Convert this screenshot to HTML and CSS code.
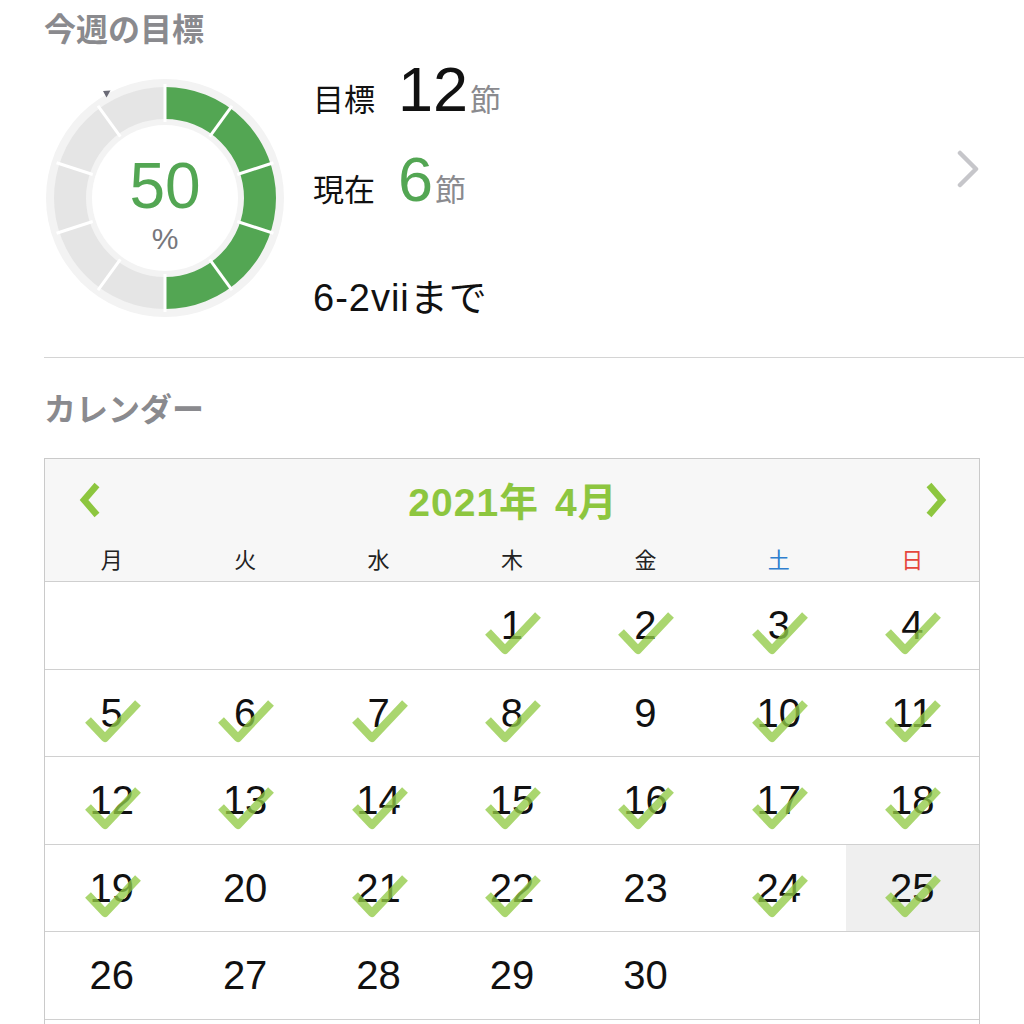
FILE: index.html
```html
<!DOCTYPE html>
<html lang="ja">
<head>
<meta charset="utf-8">
<link rel="stylesheet" href="styles.css">
</head>
<body>
<div class="page">
  <h2 class="section-title">今週の目標</h2>
  <div class="goal">
    <div class="donut">
      <svg class="donut-svg" width="242" height="242" viewBox="0 0 242 242">
        <circle cx="121" cy="121" r="119" fill="#f3f3f3"/>
        <circle cx="121" cy="121" r="73" fill="#ffffff"/>
        <path d="M121 26 A95 95 0 0 1 121 216" fill="none" stroke="#53a653" stroke-width="32"/>
        <path d="M121 216 A95 95 0 0 1 121 26" fill="none" stroke="#e5e5e5" stroke-width="32"/>
        <g stroke="#ffffff" stroke-width="3">
          <line x1="121" y1="45" x2="121" y2="7" transform="rotate(0 121 121)"/>
          <line x1="121" y1="45" x2="121" y2="7" transform="rotate(36 121 121)"/>
          <line x1="121" y1="45" x2="121" y2="7" transform="rotate(72 121 121)"/>
          <line x1="121" y1="45" x2="121" y2="7" transform="rotate(108 121 121)"/>
          <line x1="121" y1="45" x2="121" y2="7" transform="rotate(144 121 121)"/>
          <line x1="121" y1="45" x2="121" y2="7" transform="rotate(180 121 121)"/>
          <line x1="121" y1="45" x2="121" y2="7" transform="rotate(216 121 121)"/>
          <line x1="121" y1="45" x2="121" y2="7" transform="rotate(252 121 121)"/>
          <line x1="121" y1="45" x2="121" y2="7" transform="rotate(288 121 121)"/>
          <line x1="121" y1="45" x2="121" y2="7" transform="rotate(324 121 121)"/>
        </g>
        <polygon points="59,14 66.5,13.5 62.5,20.5" fill="#6a6a76"/>
      </svg>
      <div class="donut-label">
        <span class="pct-num">50</span>
        <span class="pct-sign">%</span>
      </div>
    </div>
    <div class="info">
      <div class="line line-target"><span class="lbl">目標</span><span class="num">12</span><span class="unit">節</span></div>
      <div class="line line-current"><span class="lbl">現在</span><span class="num num-green">6</span><span class="unit">節</span></div>
      <div class="line-until">6-2viiまで</div>
    </div>
    <svg class="chev" width="24" height="38" viewBox="0 0 24 38">
      <polyline points="4,3 20,19 4,35" fill="none" stroke="#c6c6ca" stroke-width="4.5" stroke-linecap="round" stroke-linejoin="round"/>
    </svg>
  </div>
  <div class="divider"></div>
  <h2 class="section-title title-cal">カレンダー</h2>
  <div class="calendar">
    <div class="cal-head">
      <div class="month-row">
        <svg class="nav" width="22" height="36" viewBox="0 0 22 36"><polyline points="18,3 5,18 18,33" fill="none" stroke="#8dc63f" stroke-width="6.5" stroke-linejoin="miter"/></svg>
        <span class="month-title">2021年 4月</span>
        <svg class="nav" width="22" height="36" viewBox="0 0 22 36"><polyline points="4,3 17,18 4,33" fill="none" stroke="#8dc63f" stroke-width="6.5" stroke-linejoin="miter"/></svg>
      </div>
      <div class="weekdays">
        <span>月</span><span>火</span><span>水</span><span>木</span><span>金</span><span class="sat">土</span><span class="sun">日</span>
      </div>
    </div>
    <div class="days" id="days"></div>
  </div>
</div>
<script src="script.js"></script>
</body>
</html>
```

FILE: script.js
```javascript
(function () {
  var checked = [1,2,3,4,5,6,7,8,10,11,12,13,14,15,16,17,18,19,21,22,24,25];
  var grid = document.getElementById('days');
  var html = '';
  // April 2021 starts on Thursday (Mon-first: 3 blanks)
  var cells = [];
  for (var i = 0; i < 3; i++) cells.push(null);
  for (var d = 1; d <= 30; d++) cells.push(d);
  while (cells.length < 42) cells.push(null);
  cells.forEach(function (d) {
    if (d === null) { html += '<div class="day"></div>'; return; }
    var cls = 'day' + (d === 25 ? ' today' : '');
    html += '<div class="' + cls + '"><span class="day-num">' + d + '</span>';
    if (checked.indexOf(d) !== -1) {
      html += '<svg class="check" width="64" height="48" viewBox="0 0 64 48"><polyline points="8,25 25,43 58,8" fill="none" stroke="#92ca46" stroke-opacity="0.78" stroke-width="8" stroke-linejoin="round"/></svg>';
    }
    html += '</div>';
  });
  grid.innerHTML = html;
})();
```

FILE: styles.css
```css
* { box-sizing: border-box; }
html, body { margin: 0; padding: 0; background: #ffffff; }
body {
  font-family: "Liberation Sans", "Noto Sans CJK JP", sans-serif;
  color: #111111;
  width: 1024px;
}
.page { padding-left: 44px; }

.section-title {
  margin: 0;
  height: 54px;
  line-height: 54px;
  font-family: "Noto Sans CJK JP", sans-serif;
  font-size: 32px;
  font-weight: 700;
  color: #8a8a8e;
}

.goal {
  display: flex;
  align-items: flex-start;
  height: 303px;
}
.donut {
  position: relative;
  width: 242px;
  height: 242px;
  margin-top: 23px;
  flex: none;
}
.donut-svg { display: block; }
.donut-label {
  position: absolute;
  inset: 0;
  display: flex;
  flex-direction: column;
  align-items: center;
  padding-top: 77px;
}
.pct-num {
  font-size: 64px;
  line-height: 64px;
  color: #53a653;
}
.pct-sign {
  margin-top: 6px;
  font-size: 30px;
  line-height: 30px;
  color: #77777c;
}

.info {
  flex: 1;
  margin-left: 27px;
  display: flex;
  flex-direction: column;
}
.line {
  display: flex;
  align-items: baseline;
}
.line > span { line-height: 1; }
.line-target { margin-top: 4px; }
.line-current { margin-top: 27px; }
.lbl {
  font-family: "Noto Sans CJK JP", sans-serif;
  font-size: 31px;
  color: #111111;
  margin-right: 23px;
}
.num {
  font-size: 63px;
  color: #111111;
}
.num-green { color: #53a653; }
.unit {
  font-family: "Noto Sans CJK JP", sans-serif;
  font-size: 31px;
  color: #8a8a8e;
  margin-left: 2px;
}
.line-until {
  margin-top: 68px;
  font-size: 38px;
  letter-spacing: 1px;
  line-height: 1;
  color: #111111;
}
.chev {
  flex: none;
  margin-top: 96px;
  margin-right: 44px;
}

.divider {
  height: 0;
  border-top: 1.5px solid #d4d4d4;
}
.title-cal { margin-top: 22px; margin-bottom: 24px; }

.calendar {
  margin-right: 44px;
  border: 1.5px solid #cacaca;
  border-bottom: none;
}
.cal-head {
  background: #f7f7f7;
  border-bottom: 1.5px solid #cfcfcf;
}
.month-row {
  height: 76px;
  display: flex;
  align-items: center;
  justify-content: space-between;
  padding: 6px 32px 0 34px;
}
.nav { display: block; }
.month-title {
  font-size: 39px;
  font-weight: 700;
  letter-spacing: 1px;
  word-spacing: 4px;
  color: #8dc63f;
  line-height: 1;
  margin-top: 4px;
}
.weekdays {
  display: grid;
  grid-template-columns: repeat(7, 1fr);
  height: 46px;
}
.weekdays span {
  text-align: center;
  font-family: "Noto Sans CJK JP", sans-serif;
  font-size: 22px;
  line-height: 46px;
  color: #222222;
}
.weekdays .sat { color: #2f7fcf; }
.weekdays .sun { color: #e5463d; }

.days {
  display: grid;
  grid-template-columns: repeat(7, 1fr);
}
.day {
  position: relative;
  height: 87.5px;
  border-bottom: 1.5px solid #d0d0d0;
  display: flex;
  align-items: center;
  justify-content: center;
}
.day.today { background: #efefef; }
.day-num {
  font-size: 40px;
  line-height: 1;
  color: #111111;
}
.check {
  position: absolute;
  left: 50%;
  top: 50%;
  margin-left: -32px;
  margin-top: -18px;
}
```
